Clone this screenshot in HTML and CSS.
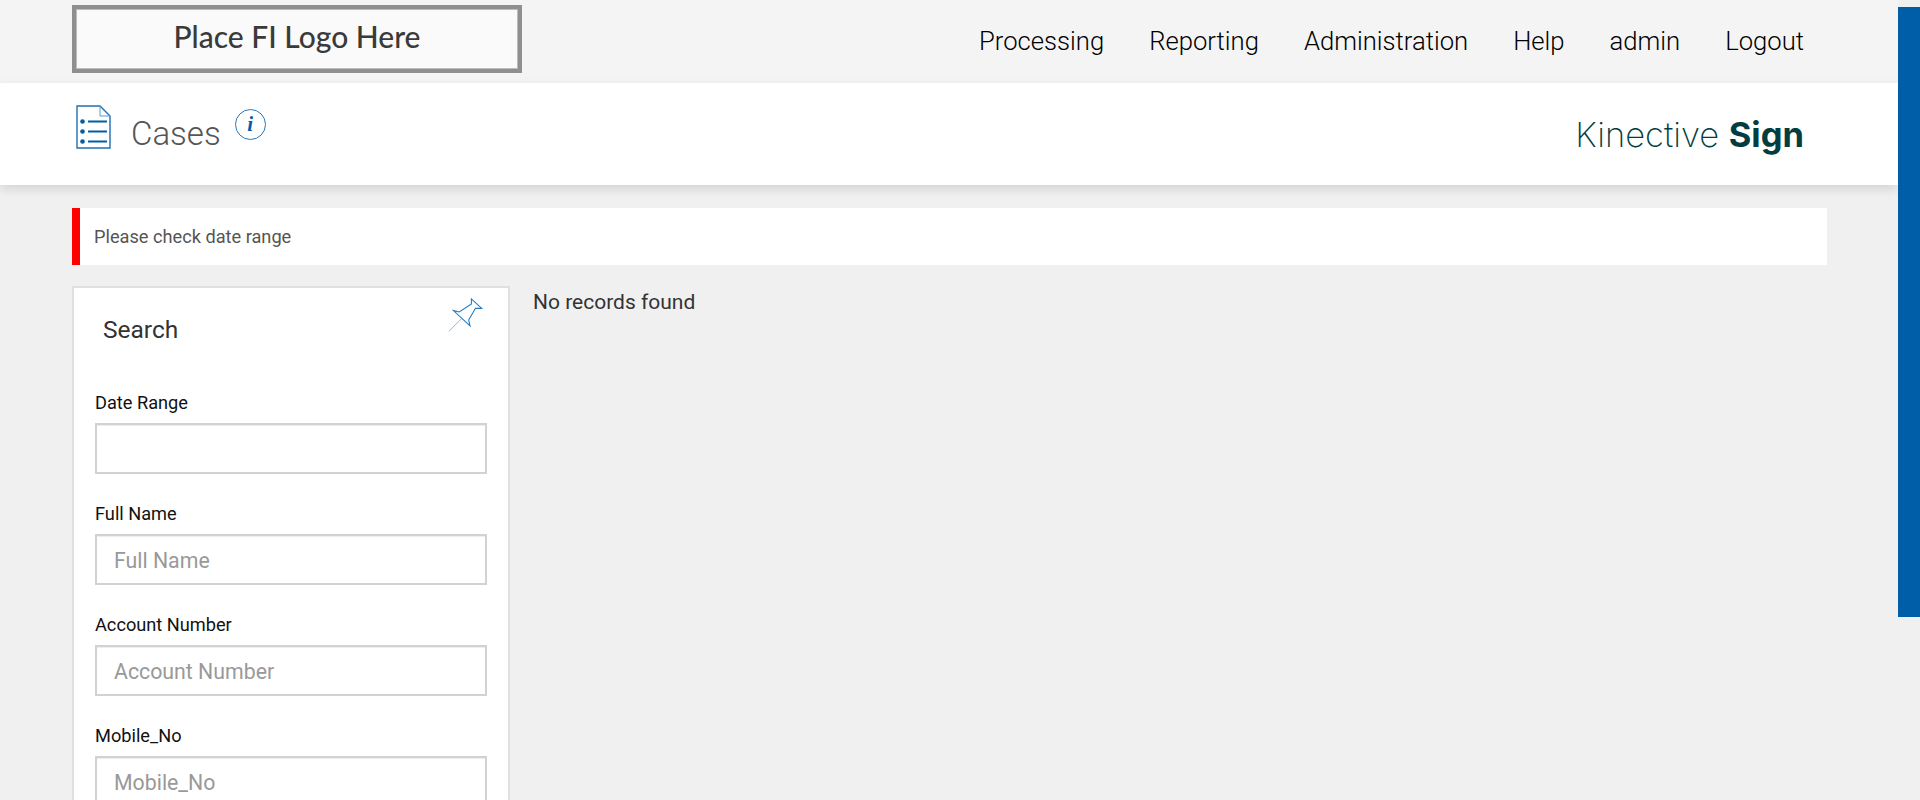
FILE: index.html
```html
<!DOCTYPE html>
<html lang="en">
<head>
<meta charset="utf-8">
<title>Cases</title>
<link rel="stylesheet" href="styles.css">
</head>
<body>
<div class="page">
  <header class="topbar">
    <div class="logo"><div class="logo-inner">Place FI Logo Here</div></div>
    <nav class="nav">
      <a>Processing</a><a>Reporting</a><a>Administration</a><a>Help</a><a>admin</a><a>Logout</a>
    </nav>
  </header>
  <section class="subbar">
    <svg class="doc-icon" width="35" height="44" viewBox="0 0 35 44" aria-hidden="true">
      <path d="M1 1H24L34 11V43H1Z" fill="none" stroke="#1f70b2" stroke-width="1.4"/>
      <path d="M24 1V11H34" fill="none" stroke="#5a9bd0" stroke-width="1"/>
      <circle cx="6.500" cy="16.500" r="2.300" fill="#005ea8"/>
      <circle cx="6.500" cy="26.500" r="2.300" fill="#005ea8"/>
      <circle cx="6.500" cy="36.500" r="2.300" fill="#005ea8"/>
      <path d="M12 16.500H31M12 26.500H31M12 36.500H31" stroke="#005ea8" stroke-width="2"/>
    </svg>
    <h1 class="title">Cases</h1>
    <span class="info"><i>i</i></span>
    <div class="brand">Kinective <b>Sign</b></div>
  </section>
  <main class="content">
    <div class="alert">Please check date range</div>
    <div class="columns">
      <aside class="card">
        <div class="card-head">
          <h2>Search</h2>
          <svg class="pin" width="36" height="38" viewBox="0 0 40 40" aria-hidden="true">
            <path d="M6 14L12.500 15.500L26 6.500L26 1L37.500 11.500L30.500 11.500L23 24.500L24.500 31Z" fill="none" stroke="#1f7cc4" stroke-width="1.200"/>
            <path d="M15 23L1 37" stroke="#7fb3db" stroke-width="1"/>
          </svg>
        </div>
        <label class="field"><span>Date Range</span><input type="text"></label>
        <label class="field"><span>Full Name</span><input type="text" placeholder="Full Name"></label>
        <label class="field"><span>Account Number</span><input type="text" placeholder="Account Number"></label>
        <label class="field"><span>Mobile_No</span><input type="text" placeholder="Mobile_No"></label>
      </aside>
      <p class="empty">No records found</p>
    </div>
  </main>
  <div class="side-bar"></div>
</div>
</body>
</html>
```
FILE: styles.css
```css
* { box-sizing: border-box; }
html, body { margin: 0; height: 100%; overflow: hidden; }
body { background: #f0f0f0; font-family: Roboto, "Liberation Sans", sans-serif; }
.page { position: relative; height: 800px; overflow: hidden; padding-right: 22px; }
.topbar { height: 83px; background: #f4f4f4; display: flex; align-items: flex-start; justify-content: space-between; padding: 5px 94px 0 72px; }
.logo { width: 450px; height: 68px; border: 4px solid #8f8f8f; background: #fafafa; }
.logo-inner { height: 100%; border: 1px solid #bbb; padding-bottom: 6px; display: flex; align-items: center; justify-content: center; font-family: Lato, sans-serif; font-size: 30px; font-weight: 500; color: #3a3a3a; }
.nav { display: flex; gap: 45px; font-size: 25.65px; font-weight: 300; color: #000; padding-top: 21px; }
.subbar { height: 102px; background: #fff; box-shadow: 0 4px 10px rgba(0,0,0,.12); display: flex; align-items: flex-start; padding: 22px 94px 0 76px; position: relative; }
.doc-icon { flex: none; }
.title { margin: 9px 0 0 20px; font-size: 33px; font-weight: 300; color: #555; line-height: 40px; }
.info { margin: 4px 0 0 14px; width: 31px; height: 31px; border: 1px solid #2a78b8; border-radius: 50%; display: flex; align-items: center; justify-content: center; font-family: "Liberation Serif", serif; font-weight: 700; font-size: 21px; color: #005ea8; }
.brand { margin-left: auto; margin-top: 8px; font-family: Inter, sans-serif; font-weight: 250; font-size: 34.5px; line-height: 44px; color: #023d42; }
.brand b { font-weight: 700; }
.content { padding: 23px 71px 0 72px; }
.alert { height: 57px; background: #fff; border-left: 8px solid #f00; padding-left: 14px; display: flex; align-items: center; font-size: 18.2px; color: #555; }
.columns { display: flex; align-items: flex-start; margin-top: 21px; }
.card { width: 438px; height: 600px; flex: none; background: #fff; border: 2px solid #e0e0e0; padding: 0 21px; }
.card-head { height: 103px; position: relative; padding: 26px 0 0 8px; }
.card-head h2 { margin: 0; font-size: 24.5px; font-weight: 400; color: #333; line-height: 32px; }
.pin { position: absolute; top: 9px; right: 3px; }
.field { display: block; margin-bottom: 28px; }
.field span { display: block; font-size: 18.2px; color: #111; line-height: 24px; margin-bottom: 8px; }
.field input { display: block; width: 100%; height: 51px; border: 2px solid #d2d2d2; padding: 2px 17px 0; font: 400 21.3px Roboto, sans-serif; color: #333; background: #fff; outline: none; box-shadow: inset 0 1px 1px rgba(0,0,0,.075); }
.field input::placeholder { color: #999; opacity: 1; }
.empty { margin: 3px 0 0 23px; font-size: 21px; line-height: 26px; color: #333; }
.side-bar { position: absolute; top: 7px; right: 0; width: 22px; height: 610px; background: #005ea8; }
```
